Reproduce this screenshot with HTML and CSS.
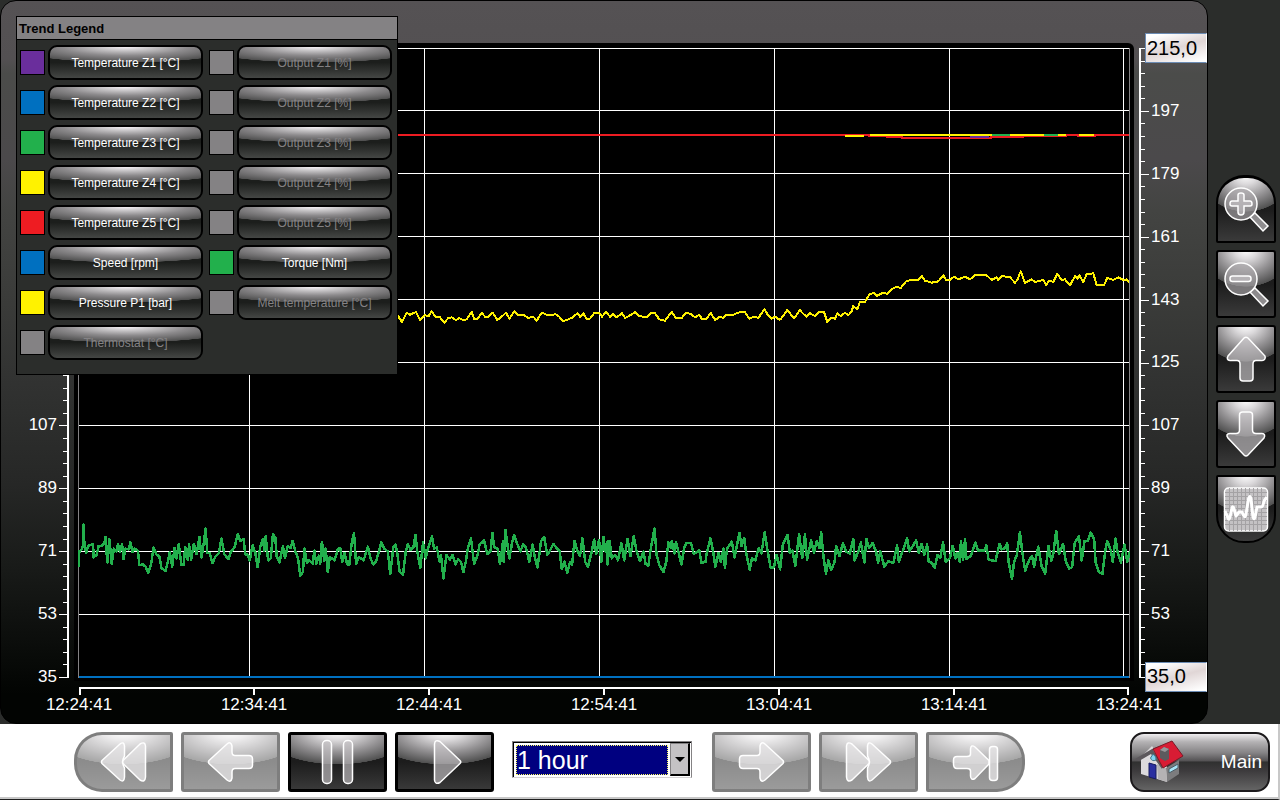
FILE: index.html
```
<!DOCTYPE html>
<html lang="en">
<head>
<meta charset="utf-8">
<meta name="viewport" content="width=device-width, initial-scale=1">
<title>Trend</title>
<link rel="stylesheet" href="styles.css">
</head>
<body>
<main class="workspace">
  <section class="panel" aria-label="Trend chart">
    <div class="axis axis-left">
      <ul class="scale">
        <li></li><li></li><li></li><li></li><li></li><li></li>
        <li>107</li><li>89</li><li>71</li><li>53</li><li>35</li>
      </ul>
      <svg class="ruler" viewBox="0 0 10 638" preserveAspectRatio="none" aria-hidden="true">
        <path class="ruler-line" d="M9 5V635"/>
        <path class="ticks-minor" d="M6.5 5V635"/>
        <path class="ticks-major" d="M4 5V635"/>
      </svg>
    </div>

    <div class="plot">
      <svg viewBox="78 47 1052 632" preserveAspectRatio="none" role="img" aria-label="Trend curves">
        <g class="grid-lines">
          <path d="M78 48.5H1130M78 110.5H1130M78 173.5H1130M78 236.5H1130M78 299.5H1130M78 362.5H1130M78 425.5H1130M78 488.5H1130M78 551.5H1130M78 614.5H1130"/>
          <path d="M249.5 48V678M424.5 48V678M599.5 48V678M774.5 48V678M949.5 48V678M1123.5 48V678"/>
          <path class="edge" d="M78.5 48V678M1129.5 48V678"/>
        </g>
        <path class="trace blue" d="M79 677H1129"/>
        <path class="trace red" d="M79 135H869V136H887V137H902V138H991V137H1023V136H1066V135H1078V136H1095V135H1129"/>
        <path class="trace violet" d="M970 137H989"/>
        <path class="trace yellow" d="M845 136H864M870 135H1066M1079 135H1094"/>
        <path class="trace green" d="M992 135H1010M1044 135H1058"/>
        <g transform="translate(390 290) scale(.33333)">
          <polyline class="trace yellow" points="0,76 24,78 36,96 50,68 60,74 78,66 90,90 104,76 116,78 125,64 136,80 150,82 163,98 175,84 185,82 198,90 208,84 218,90 230,88 245,66 252,86 263,86 275,68 285,80 295,80 308,68 322,90 335,80 348,68 358,86 373,64 385,76 400,74 415,84 430,80 440,92 455,68 470,74 485,76 495,72 508,80 518,94 535,88 548,82 562,70 570,80 580,70 590,86 600,86 612,70 628,70 636,80 648,66 660,80 668,72 680,82 696,70 706,84 720,76 736,66 748,78 770,82 785,68 795,70 808,88 825,92 845,66 858,84 875,84 888,68 903,72 915,82 928,74 935,86 950,86 962,68 975,90 990,80 1000,84 1010,74 1030,74 1050,66 1065,66 1078,86 1092,80 1105,84 1113,72 1124,58 1132,72 1145,86 1155,80 1170,90"/>
        </g>
        <g transform="translate(780 100) scale(.33333)">
          <polyline class="trace yellow" points="0,660 22,630 42,655 60,630 68,640 80,650 90,640 105,648 118,636 132,636 142,666 152,654 165,656 172,640 182,648 195,638 205,646 215,634 220,618 232,628 240,606 255,606 268,584 282,578 290,588 310,578 322,582 335,568 350,560 362,564 380,542 415,540 425,528 435,542 455,548 475,544 490,526 498,540 510,540 522,530 535,538 555,530 570,538 585,526 620,526 635,540 650,532 655,540 665,528 690,532 705,548 712,540 722,514 735,548 755,538 765,546 790,540 798,555 808,542 820,546 832,522 845,540 855,538 870,556 885,528 892,536 898,526 910,546 920,522 940,520 950,555 972,555 982,534 1000,540 1015,532 1030,540 1040,538 1047,548"/>
        </g>
        <g transform="translate(60 510) scale(.34507)">
          <polyline class="trace green" points="54,164 56,120 62,115 66,105 68,42 71,104 76,124 82,104 96,98 97,138 106,130 112,104 120,104 128,98 132,78 137,152 143,84 150,156 156,112 164,120 168,98 174,120 180,98 184,142 190,112 200,114 204,94 210,122 216,112 226,118 230,160 240,158 248,164 256,182 264,158 271,108 280,130 288,134 294,168 306,176 312,152 318,122 325,164 332,110 338,140 344,98 352,160 358,160 363,108 370,144 374,100 380,144 388,98 396,128 404,78 410,138 416,100 422,54 427,124 434,126 442,154 450,136 460,126 468,82 476,128 488,142 496,120 506,108 515,70 522,90 532,84 537,128 544,130 550,146 558,102 566,124 573,166 580,108 588,84 592,118 596,76 603,146 611,140 617,70 624,80 628,134 636,152 646,104 652,140 660,104 668,110 674,90 682,120 690,140 696,190 704,180 708,112 716,154 722,146 732,156 737,118 743,156 750,132 754,156 759,92 766,148 770,112 776,180 782,136 796,146 805,114 812,110 818,150 824,124 832,156 838,160 845,98 852,66 858,156 866,136 880,146 892,106 900,140 908,158 916,148 924,122 931,94 940,112 950,120 957,186 966,108 972,100 978,128 984,178 994,188 1002,120 1008,98 1016,116 1024,108 1030,72 1036,124 1044,168 1052,94 1060,140 1066,112 1078,76 1084,112 1092,108 1100,150 1104,130 1111,198 1120,130 1130,144 1138,130 1146,158 1154,142 1162,150 1169,180 1176,150 1182,110 1191,82 1200,156 1210,132 1216,100 1229,88 1238,128 1248,118 1253,66 1258,108 1268,112 1275,156 1284,90 1286,150 1291,58 1302,140 1310,96 1316,72 1324,96 1334,120 1342,100 1350,108 1360,150 1370,100 1376,138 1384,166 1394,90 1403,78 1412,130 1420,118 1430,98 1440,112 1448,120 1454,170 1462,150 1470,182 1478,150 1484,160 1491,90 1500,120 1507,134 1514,82 1522,150 1530,164 1540,124 1548,86 1554,128 1562,86 1565,110"/>
        </g>
        <g transform="translate(600 510) scale(.34507)">
          <polyline class="trace green" points="0,110 4,150 10,78 16,120 22,90 22,158 28,90 34,140 44,130 52,146 62,96 70,146 80,84 88,134 98,76 106,120 116,148 126,120 132,156 140,162 148,106 158,54 164,130 172,160 184,180 192,150 198,94 206,110 208,90 216,126 220,92 228,124 236,158 244,110 250,96 264,96 272,128 288,116 294,154 306,150 308,132 320,82 328,120 334,164 344,124 350,150 358,112 362,168 368,112 382,92 390,138 404,66 410,104 418,82 424,126 434,174 440,140 450,146 460,110 468,126 477,64 486,120 494,166 504,166 512,130 522,172 530,100 544,72 550,124 558,118 566,162 577,70 586,140 594,70 600,144 612,88 620,124 628,90 636,110 641,64 648,140 655,184 662,146 670,174 680,150 684,104 694,134 704,96 714,122 724,126 734,84 738,146 748,122 756,94 766,152 772,84 780,110 790,96 800,120 806,154 812,120 824,164 836,148 850,154 861,102 866,150 876,122 890,82 896,120 906,106 916,88 924,124 932,98 940,130 948,100 952,148 962,154 970,168 978,130 986,138 994,94 1002,150 1014,140 1022,104 1030,140 1036,124 1042,150 1046,90 1052,146 1058,84 1062,142 1074,134 1080,118 1088,94 1096,118 1114,118 1120,102 1126,144 1146,148 1158,98 1164,114 1174,110 1180,96 1184,150 1194,200 1200,150 1208,130 1217,64 1224,124 1232,176 1244,144 1252,134 1258,164 1270,106 1280,164 1290,184 1300,104 1308,148 1314,124 1322,60 1330,128 1342,98 1350,150 1360,170 1368,166 1376,94 1388,76 1396,146 1404,90 1414,90 1422,66 1432,84 1436,150 1446,180 1456,186 1464,120 1470,90 1480,116 1486,150 1494,82 1500,124 1510,152 1520,100 1528,150 1536,120"/>
        </g>
      </svg>
    </div>

    <div class="axis axis-right">
      <svg class="ruler" viewBox="0 0 10 638" preserveAspectRatio="none" aria-hidden="true">
        <path class="ruler-line" d="M1 5V635"/>
        <path class="ticks-minor" d="M3.5 5V635"/>
        <path class="ticks-major" d="M6 5V635"/>
      </svg>
      <ul class="scale">
        <li><input class="limit" type="text" value="215,0" aria-label="Upper limit"></li>
        <li>197</li><li>179</li><li>161</li><li>143</li><li>125</li>
        <li>107</li><li>89</li><li>71</li><li>53</li>
        <li><input class="limit" type="text" value="35,0" aria-label="Lower limit"></li>
      </ul>
    </div>

    <div class="time-axis">
      <svg viewBox="0 0 1051 8" preserveAspectRatio="none" aria-hidden="true">
        <path class="ruler-line" d="M0 1H1051"/>
        <path class="ruler-line" d="M1 0V8M175.500 0V8M350.500 0V8M525.500 0V8M700.500 0V8M875.500 0V8M1050 0V8"/>
      </svg>
      <ul class="times">
        <li>12:24:41</li><li>12:34:41</li><li>12:44:41</li><li>12:54:41</li><li>13:04:41</li><li>13:14:41</li><li>13:24:41</li>
      </ul>
    </div>

    <aside class="legend" aria-label="Trend Legend">
      <h2>Trend Legend</h2>
      <div class="legend-grid">
        <div class="entry"><span class="swatch violet"></span><button type="button">Temperature Z1 [°C]</button></div>
        <div class="entry"><span class="swatch"></span><button type="button" class="off">Output Z1 [%]</button></div>
        <div class="entry"><span class="swatch blue"></span><button type="button">Temperature Z2 [°C]</button></div>
        <div class="entry"><span class="swatch"></span><button type="button" class="off">Output Z2 [%]</button></div>
        <div class="entry"><span class="swatch green"></span><button type="button">Temperature Z3 [°C]</button></div>
        <div class="entry"><span class="swatch"></span><button type="button" class="off">Output Z3 [%]</button></div>
        <div class="entry"><span class="swatch yellow"></span><button type="button">Temperature Z4 [°C]</button></div>
        <div class="entry"><span class="swatch"></span><button type="button" class="off">Output Z4 [%]</button></div>
        <div class="entry"><span class="swatch red"></span><button type="button">Temperature Z5 [°C]</button></div>
        <div class="entry"><span class="swatch"></span><button type="button" class="off">Output Z5 [%]</button></div>
        <div class="entry"><span class="swatch blue"></span><button type="button">Speed [rpm]</button></div>
        <div class="entry"><span class="swatch green"></span><button type="button">Torque [Nm]</button></div>
        <div class="entry"><span class="swatch yellow"></span><button type="button">Pressure P1 [bar]</button></div>
        <div class="entry"><span class="swatch"></span><button type="button" class="off">Melt temperature [°C]</button></div>
        <div class="entry"><span class="swatch"></span><button type="button" class="off">Thermostat [°C]</button></div>
      </div>
    </aside>
  </section>

  <nav class="rail" aria-label="View">
    <button type="button" class="glossy round-top" aria-label="Zoom in">
      <svg viewBox="0 0 60 68">
        <path class="handle" d="M34 42L39 38L52 51L47 56Z"/>
        <circle class="lens" cx="25" cy="29" r="16"/>
        <path class="sign" d="M22 20Q22 18 25 18Q28 18 28 20V26H34Q36 26 36 29Q36 31 34 31H28V37Q28 40 25 40Q22 40 22 37V31H16Q14 31 14 29Q14 26 16 26H22Z"/>
      </svg>
    </button>
    <button type="button" class="glossy" aria-label="Zoom out">
      <svg viewBox="0 0 60 68">
        <path class="handle" d="M34 42L39 38L52 51L47 56Z"/>
        <circle class="lens" cx="25" cy="29" r="16"/>
        <rect class="sign" x="14" y="26" width="21" height="5.500" rx="2.500"/>
      </svg>
    </button>
    <button type="button" class="glossy" aria-label="Move up">
      <svg viewBox="0 0 60 68">
        <path class="shape" d="M28 13Q30 11.500 32 13L49 31Q50 35 46 35.500H40Q37 35.500 37 39V53Q37 56 34 56H27Q24 56 24 53V39Q24 35.500 21 35.500H14Q10 35 12 31Z"/>
      </svg>
    </button>
    <button type="button" class="glossy" aria-label="Move down">
      <svg viewBox="0 0 60 68">
        <path class="shape" d="M28 55Q30 57 32 55L48 38Q50 34 46 33.500H40Q36.500 33.500 36.500 30V15Q36.500 12 33.500 12H26.500Q23.500 12 23.500 15V30Q23.500 33.500 20 33.500H14Q9 34 12 38Z"/>
      </svg>
    </button>
    <button type="button" class="glossy round-bottom" aria-label="Trend settings">
      <svg viewBox="0 0 60 68">
        <rect class="shape chart-back" x="8.500" y="13" width="43" height="43" rx="4"/>
        <path class="chart-grid" d="M13.500 13V56M17.500 13V56M21.500 13V56M25.500 13V56M29.500 13V56M33.500 13V56M37.500 13V56M41.500 13V56M45.500 13V56M9 17.500H51M9 21.500H51M9 25.500H51M9 29.500H51M9 33.500H51M9 37.500H51M9 41.500H51M9 45.500H51M9 49.500H51"/>
        <path class="chart-wave" d="M9 36L12 43Q13 46 14 42L16 33Q17 30 18 34L20 41L23 37L26 37Q29 45 30 39L32.500 24Q34 19 35 24L37 42Q38.500 46 39.500 40L41 32L45 32Q47 32 48 26L51 22"/>
      </svg>
    </button>
  </nav>
</main>

<footer class="toolbar">
  <button type="button" class="glossy wide faded round-left" aria-label="Fast backward">
    <svg viewBox="0 0 99 60">
      <path class="shape" d="M28 28.500L46 12Q50 9 50.500 14V24Q47 30 50.500 36V45Q50 51 46 48L28 31.500Q27 30 28 28.500Z"/>
      <path class="shape" d="M49 28.500L66 12Q71 9 71.500 14V45Q71 51 66 48L49 31.500Q48 30 49 28.500Z"/>
    </svg>
  </button>
  <button type="button" class="glossy wide faded" aria-label="Backward">
    <svg viewBox="0 0 99 60">
      <path class="shape" d="M28 28.500L46 12Q50 9 51 14V20Q51 23.500 54 23.500H68Q71.500 23.500 71.500 27V33Q71.500 36.500 68 36.500H54Q51 36.500 51 40V46Q50 51 46 48L28 31.500Q27 30 28 28.500Z"/>
    </svg>
  </button>
  <button type="button" class="glossy wide" aria-label="Pause">
    <svg viewBox="0 0 99 60">
      <rect class="shape" x="34.500" y="8.500" width="9" height="43" rx="4"/>
      <rect class="shape" x="55.500" y="8.500" width="9" height="43" rx="4"/>
    </svg>
  </button>
  <button type="button" class="glossy wide" aria-label="Play">
    <svg viewBox="0 0 99 60">
      <path class="shape" d="M39.500 12Q40 7 45 9.500L65 28.500Q66.500 30 65 31.500L45 50.500Q40 53 39.500 48Z"/>
    </svg>
  </button>

  <div class="range">
    <select aria-label="Time range">
      <option selected>1 hour</option>
    </select>
    <span class="drop" aria-hidden="true"></span>
  </div>

  <button type="button" class="glossy wide faded" aria-label="Forward">
    <svg viewBox="0 0 99 60">
      <path class="shape" d="M71 28.500L53 12Q49 9 48 14V20Q48 23.500 45 23.500H31Q27.500 23.500 27.500 27V33Q27.500 36.500 31 36.500H45Q48 36.500 48 40V46Q49 51 53 48L71 31.500Q72 30 71 28.500Z"/>
    </svg>
  </button>
  <button type="button" class="glossy wide faded" aria-label="Fast forward">
    <svg viewBox="0 0 99 60">
      <path class="shape" d="M71 28.500L53 12Q49 9 48.500 14V24Q52 30 48.500 36V45Q49 51 53 48L71 31.500Q72 30 71 28.500Z"/>
      <path class="shape" d="M50 28.500L33 12Q28 9 27.500 14V45Q28 51 33 48L50 31.500Q51 30 50 28.500Z"/>
    </svg>
  </button>
  <button type="button" class="glossy wide faded round-right" aria-label="Jump to end">
    <svg viewBox="0 0 99 60">
      <path class="shape" d="M63 28.500L49 15Q45 12 44.500 17V22Q44.500 24.500 41 24.500H31Q27.500 24.500 27.500 28V32Q27.500 36.500 31 36.500H41Q44.500 36.500 44.500 39V44Q45 49 49 46.500L63 32Z"/>
      <rect class="shape" x="63.500" y="14.500" width="8" height="34" rx="3"/>
    </svg>
  </button>

  <button type="button" class="main-button">
    <svg viewBox="0 0 50 44" aria-hidden="true">
      <path fill="#dcdadc" d="M6 17L17 6L32 27V42L6 34Z"/>
      <path fill="#7c7c7e" d="M31 28L44 20V34L32 42Z"/>
      <path fill="#b4b2b4" d="M22 24L31 28L32 42L23 39Z"/>
      <path fill="#5c585c" d="M0 19L17 9L37 1L29 4L18 10L28 26L27 29L16 14L4 21Z"/>
      <path fill="#d81c34" stroke="#7c1826" d="M18 9L37 1L48 16L28 28Z"/>
      <path fill="#5c5a5e" d="M25 10L29 7L34 9V19L30 21L25 18Z"/>
      <path fill="#98969a" d="M25 10L29 7L34 9L30 12Z"/>
      <path fill="#2a2ea0" stroke="#161a5c" d="M14 23L21 25V39L14 37Z"/>
      <path fill="#7fd4f0" stroke="#42748a" d="M18 14Q22 17 21 20Q17 22 15.500 18Z"/>
      <path fill="#a8e4f6" stroke="#4c5c66" d="M34 29L43 24V28L34 33Z"/>
    </svg>
    <span>Main</span>
  </button>
</footer>
</body>
</html>
```
FILE: styles.css
```
* {
  box-sizing: border-box;
}

body {
  margin: 0;
  min-height: 100vh;
  display: flex;
  flex-direction: column;
  background: #2b2d2b;
  color: #fff;
  font-family: "Liberation Sans", Arial, sans-serif;
}

button,
input,
select {
  font-family: inherit;
}

ul {
  margin: 0;
  padding: 0;
  list-style: none;
}

svg {
  display: block;
}

.workspace {
  flex: 1;
  display: grid;
  grid-template-columns: minmax(0, 1fr) 72px;
}

/* Chart panel */

.panel {
  position: relative;
  display: grid;
  grid-template-columns: 73px minmax(0, 1fr) 73px;
  grid-template-rows: 42px minmax(0, 1fr) 42px;
  min-height: 480px;
  border: 1px solid #000;
  border-radius: 16px;
  background: linear-gradient(#555254 0, #535052 8%, #4b4c4a 10%, #4b494b 22%, #434442 29%, #3a3b39 42%, #313231 53%, #262726 67%, #191b19 78%, #0b0d0b 89%, #020402 96%);
}

.axis {
  grid-row: 2;
  display: grid;
  min-height: 0;
}

.axis-left {
  grid-column: 1;
  grid-template-columns: minmax(0, 1fr) 10px;
  column-gap: 2px;
  padding-right: 5px;
  text-align: right;
}

.axis-right {
  grid-column: 3;
  grid-template-columns: 10px minmax(0, 1fr);
  column-gap: 2px;
  padding-left: 5px;
}

.scale {
  display: grid;
  grid-template-rows: repeat(11, 20px);
  align-content: space-between;
  margin: -5px 0 -6px;
  font-size: 17px;
  line-height: 20px;
}

.scale li {
  display: flex;
  align-items: center;
}

.axis-left li {
  justify-content: flex-end;
}

.ruler {
  width: 10px;
  height: 100%;
  min-height: 0;
}

.ruler-line,
.ticks-minor,
.ticks-major {
  fill: none;
  stroke: #fff;
  stroke-width: 2;
  shape-rendering: crispEdges;
}

.ticks-minor {
  stroke-width: 5;
  stroke-dasharray: 1 11.58;
}

.ticks-major {
  stroke-width: 8;
  stroke-dasharray: 1 61.9;
}

.limit {
  flex: none;
  width: 62px;
  height: 30px;
  margin: 0 0 0 -6px;
  padding: 0 1px;
  border: 1px solid #6c8cb4;
  border-right-color: #fff;
  background: linear-gradient(165deg, #fff 10%, #e0d6d6 50%, #fff 95%);
  color: #000;
  font-size: 20px;
}

.plot {
  grid-column: 2;
  grid-row: 2;
  min-height: 0;
  padding: 4px 4px 2px;
  border-radius: 6px 6px 0 0;
  background: #000;
}

.plot svg {
  width: 100%;
  height: 100%;
}

.grid-lines path {
  fill: none;
  stroke: #fff;
  stroke-width: 1;
  shape-rendering: crispEdges;
}

.grid-lines .edge {
  stroke: #848284;
}

.trace {
  fill: none;
  stroke-width: 2;
  stroke-linejoin: round;
  shape-rendering: crispEdges;
  vector-effect: non-scaling-stroke;
}

.trace.violet { stroke: #6a2e9c; }
.trace.blue { stroke: #0070c0; }
.trace.green { stroke: #22b04c; }
.trace.yellow { stroke: #fff200; }
.trace.red { stroke: #ee1c22; }

polyline.trace.green {
  stroke-width: 2.5;
}

.time-axis {
  grid-column: 1 / -1;
  grid-row: 3;
  padding: 6px 44px 0;
}

.time-axis svg {
  width: calc(100% - 68px);
  height: 8px;
  margin: 0 34px;
}

.times {
  display: flex;
  justify-content: space-between;
  font-size: 17px;
  line-height: 20px;
}

.times li {
  width: 68px;
  text-align: center;
}

/* Legend window */

.legend {
  position: absolute;
  left: 15px;
  top: 15px;
  width: 382px;
  border: 1px solid #000;
  background: #2b2d2b;
}

.legend h2 {
  margin: 0;
  padding: 1px 2px 0;
  border-bottom: 1px solid #000;
  background: #848284;
  color: #000;
  font-size: 13px;
  line-height: 21px;
}

.legend-grid {
  display: grid;
  grid-template-columns: 1fr 1fr;
  gap: 5px 6px;
  padding: 5px 5px 14px 3px;
}

.entry {
  display: grid;
  grid-template-columns: 25px minmax(0, 1fr);
  column-gap: 3px;
  align-items: center;
}

.swatch {
  height: 25px;
  border: 1px solid #000;
  background: #848284;
}

.swatch.violet { background: #6a2e9c; }
.swatch.blue { background: #0070c0; }
.swatch.green { background: #22b04c; }
.swatch.yellow { background: #fff200; }
.swatch.red { background: #ee1c22; }

.entry button {
  height: 35px;
  padding: 0;
  border: 2px solid #000;
  border-radius: 9px;
  background:
    radial-gradient(ellipse 75% 50% at 50% 0, #f4f0f4 0, #c4c2c4 25%, #8c8a8c 55%, #505050 98%, transparent 100%),
    linear-gradient(#1c1e1c 0, #1c1e1c 50%, #444644 100%);
  color: #fff;
  font-size: 12px;
}

.entry button.off {
  color: #848284;
}

/* Glossy icon buttons */

.glossy {
  flex: none;
  width: 60px;
  height: 68px;
  padding: 0;
  border: 2px solid #000;
  border-radius: 3px;
  background:
    radial-gradient(ellipse 75% 54% at 50% 0, #fff 0, #dcdadc 25%, #949294 62%, #505050 99%, transparent 100%),
    linear-gradient(#1c1c1c 0, #1c1c1c 50%, #3c3c3c 100%);
  background-origin: border-box;
}

.glossy svg {
  width: 60px;
  height: 68px;
  margin: -2px;
}

.glossy.wide {
  width: 99px;
  height: 60px;
  border-width: 3px;
}

.glossy.wide svg {
  width: 99px;
  height: 60px;
  margin: -3px;
}

.glossy.faded {
  opacity: 0.5;
}

.glossy.round-top { border-radius: 28px 28px 2px 2px; border-top-width: 3px; }
.glossy.round-top svg { margin-top: -3px; }
.round-bottom { border-radius: 2px 2px 28px 28px; }
.round-left { border-radius: 28px 2px 2px 28px; }
.round-right { border-radius: 2px 28px 28px 2px; }

.shape,
.sign,
.lens,
.handle {
  fill: rgba(196, 194, 196, 0.65);
  stroke: #fff;
  stroke-width: 1.5;
}

.lens {
  fill: rgba(170, 168, 170, 0.65);
}

.faded .shape {
  fill: rgba(208, 206, 208, 0.75);
}

.shape.chart-back {
  fill: #c4c2c4;
}

.chart-grid {
  fill: none;
  stroke: #a4a2a4;
  stroke-width: 1;
}

.chart-wave {
  fill: none;
  stroke: #fff;
  stroke-width: 3;
  stroke-linejoin: round;
}

.rail {
  display: flex;
  flex-direction: column;
  align-items: flex-start;
  gap: 7px;
  padding: 175px 4px 0 8px;
}

/* Bottom toolbar */

.toolbar {
  display: flex;
  align-items: flex-start;
  gap: 8px;
  height: 76px;
  padding: 8px 8px 0 74px;
  border-right: 2px solid #c8c8c8;
  border-bottom: 1px solid #202020;
  background: #fff;
  box-shadow: inset 0 -2px #c8c8c8;
}

.range {
  display: grid;
  grid-template-columns: minmax(0, 1fr) 20px;
  gap: 1px;
  width: 180px;
  height: 37px;
  margin: 9px 12px 0 10px;
  padding: 1px;
  border: 1px solid #848284;
  border-bottom-color: #d4d2d4;
  background: #fff;
  box-shadow: inset 1px 1px #000;
}

.range select {
  appearance: none;
  margin: 2px 1px 1px 2px;
  padding: 0;
  border: 1px dotted #ffff60;
  border-radius: 0;
  background: #000080;
  color: #fff;
  font-size: 25px;
}

.drop {
  display: grid;
  place-items: center;
  border: 1px solid #848284;
  border-width: 1px 2px 2px 1px;
  border-color: #848284 #000 #000 #848284;
  background: #c4c2c4;
}

.drop::after {
  content: "";
  border: 5px solid transparent;
  border-top-color: #000;
  border-bottom: 0;
}

.main-button {
  display: flex;
  align-items: center;
  justify-content: space-between;
  width: 140px;
  height: 60px;
  margin-left: auto;
  padding: 0 6px 0 3px;
  border: 2px solid #1c1a1c;
  border-radius: 14px;
  background: linear-gradient(#f0eef0 0, #b4b2b4 14%, #848284 34%, #545254 48%, #303030 50%, #3c3a3c 65%, #646464 100%);
  color: #fff;
  font-size: 19px;
}

.main-button svg {
  width: 50px;
  height: 44px;
}
```
